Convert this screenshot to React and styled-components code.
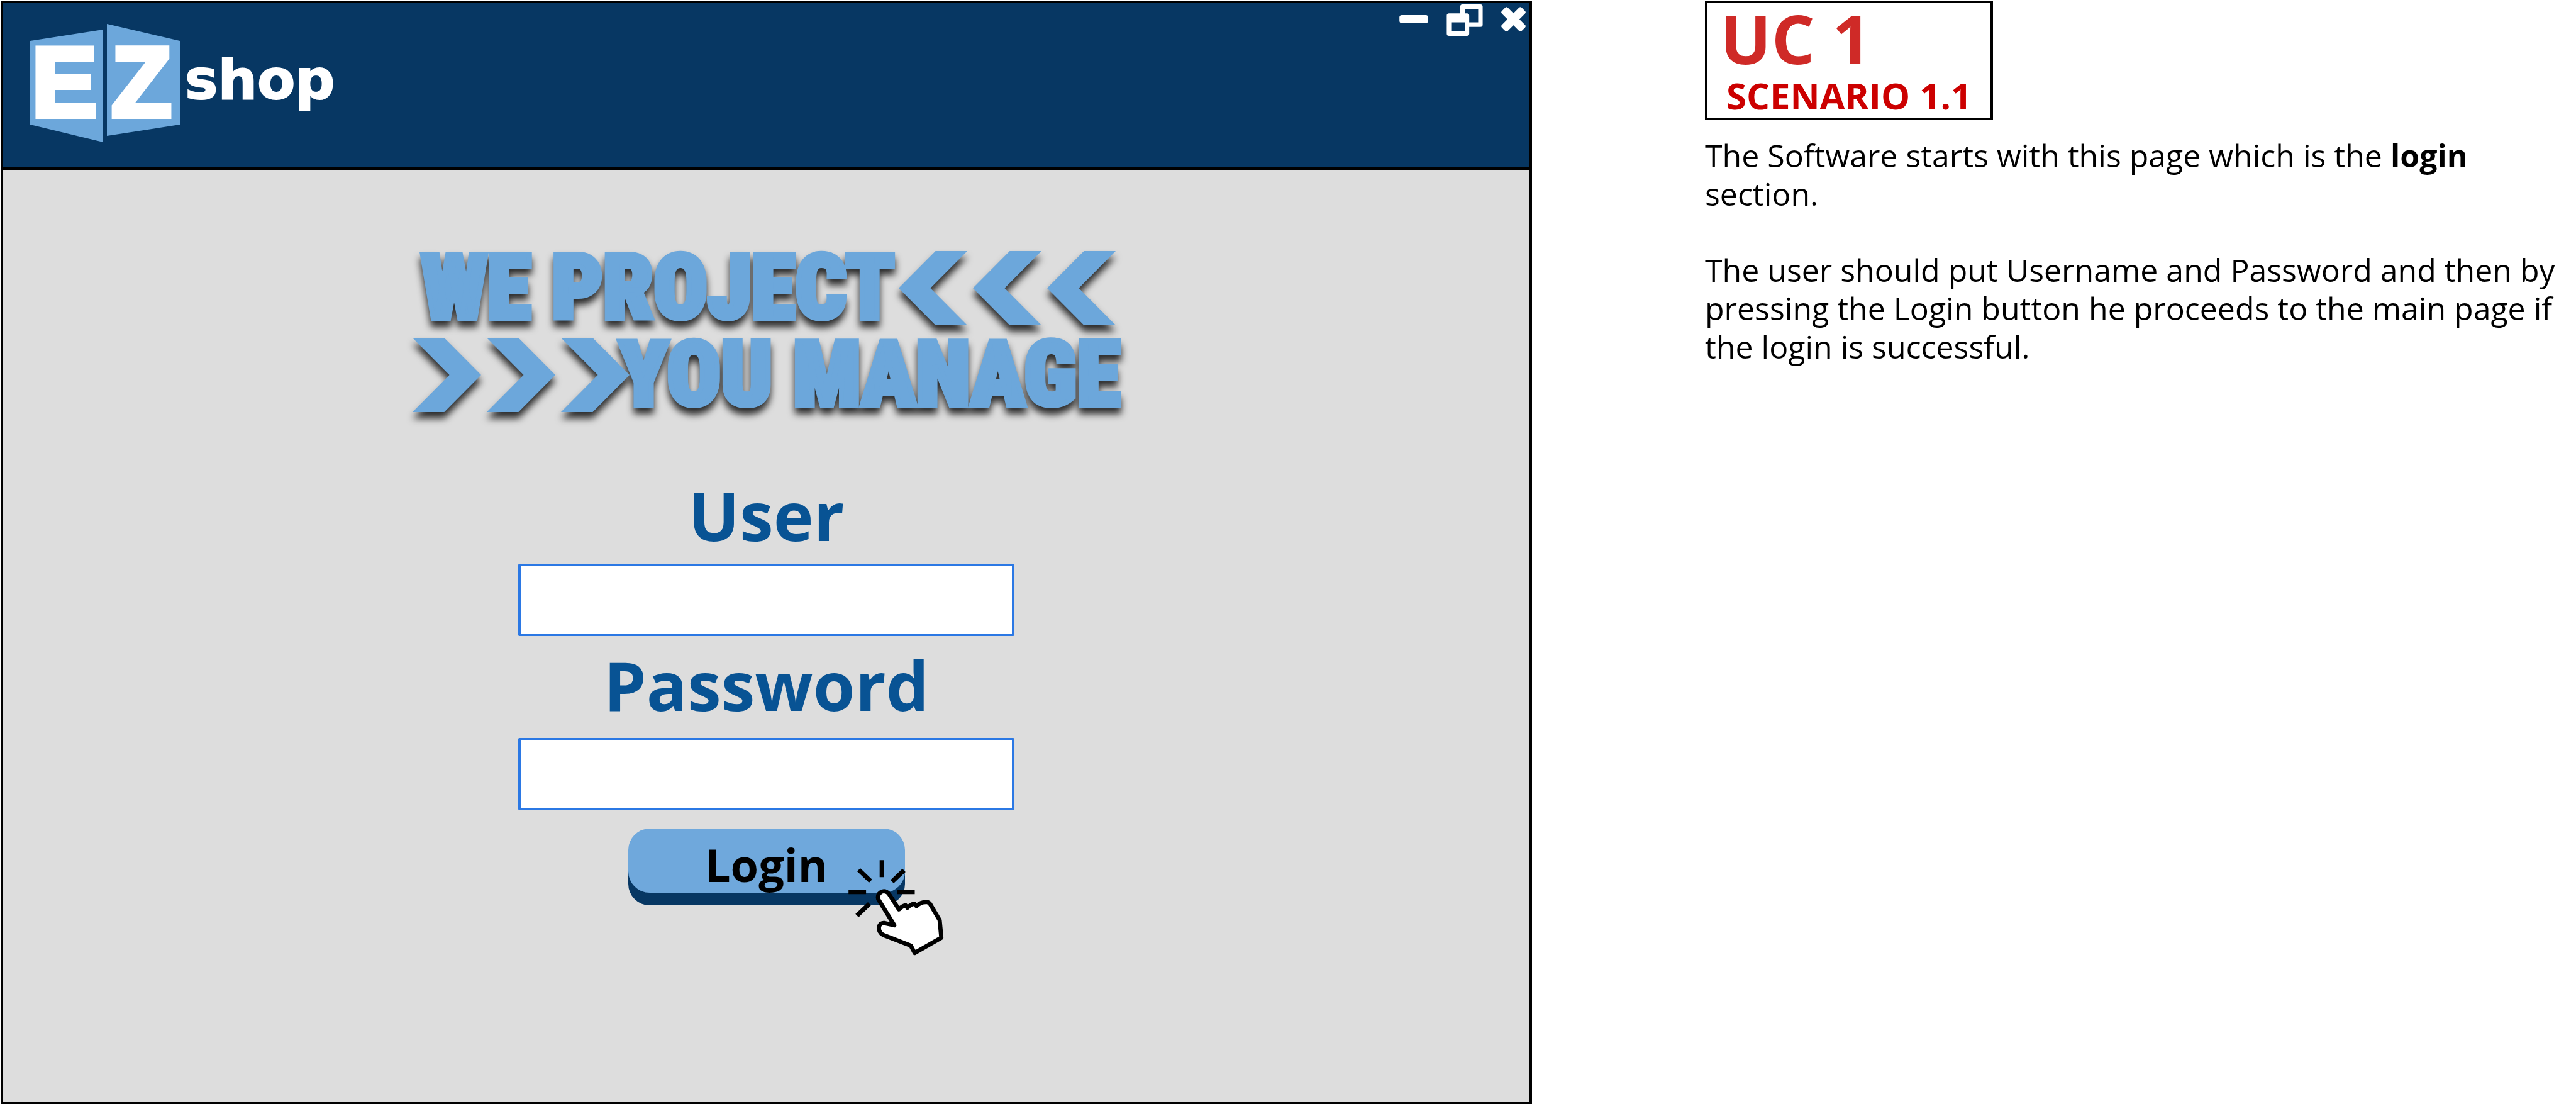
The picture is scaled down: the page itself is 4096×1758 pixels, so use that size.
import React from "react";
import styled, { createGlobalStyle } from "styled-components";

const color = {
  navy: "#073763",
  sky: "#6fa8dc",
  art: "#6ca7db",
  label: "#085394",
  field: "#2b78e4",
  panel: "#dddddd",
};

const GlobalStyle = createGlobalStyle`
  *, *::before, *::after { box-sizing: border-box; }
  body {
    margin: 0;
    background: #fff;
    color: #000;
    font-family: "Open Sans", "Noto Sans", sans-serif;
  }
  h1, h2, h3, p { margin: 0; }
`;

const Page = styled.div`
  display: grid;
  grid-template-columns: minmax(0, 2435fr) minmax(0, 1385fr);
  column-gap: 275px;
  min-height: 100vh;
  padding: 1px 0 3px 1px;
`;

const AppWindow = styled.main`
  display: flex;
  flex-direction: column;
  border: 4px solid #000;
  background: ${color.panel};
`;

const TitleBar = styled.header`
  display: flex;
  align-items: flex-start;
  justify-content: space-between;
  height: 265px;
  padding-left: 43px;
  border-bottom: 4px solid #000;
  background: ${color.navy};
`;

const Brand = styled.div`
  display: flex;
  align-items: flex-start;
  gap: 6px;
  padding-top: 32px;
`;

const BrandMark = styled.svg`
  width: 240px;
  height: 190px;
`;

const BrandLetter = styled.text`
  fill: #fff;
  stroke: #fff;
  stroke-width: 8px;
  stroke-linejoin: miter;
  font: bold 157px "Liberation Sans", Arial, sans-serif;
`;

const BrandName = styled.span`
  padding-top: 38px;
  color: #fff;
  -webkit-text-stroke: 2px #fff;
  font: bold 88px/104px "DejaVu Sans", sans-serif;
`;

const WindowControls = styled.div`
  display: flex;
  gap: 29px;
  padding: 2px 6px 0 0;
`;

const ControlButton = styled.button`
  display: block;
  padding: 0;
  border: 0;
  background: none;
  color: #fff;

  svg {
    display: block;
    height: 50px;
    fill: currentColor;
  }
`;

const Content = styled.div`
  display: flex;
  flex-direction: column;
  align-items: center;
  gap: 80px;
  padding-top: 119px;
`;

const Tagline = styled.h1`
  display: flex;
  flex-direction: column;
  width: 1126px;
  color: ${color.art};
`;

const TaglineRow = styled.span`
  display: flex;
  align-items: center;
  justify-content: space-between;
  height: 138px;
  padding: ${(p) => (p.$overlap ? "0" : "0 8px 0 14px")};
  filter: drop-shadow(0 10px 6px rgba(0, 0, 0, 0.8));

  svg {
    margin-right: ${(p) => (p.$overlap ? "-24px" : "0")};
  }
`;

const TaglineText = styled.span`
  -webkit-text-stroke: 8px ${color.art};
  font: 900 142px/138px "Roboto Condensed", "Roboto", sans-serif;
  white-space: nowrap;
`;

const Chevrons = styled.svg`
  flex: none;
  width: 345px;
  height: 118px;
  fill: ${color.art};
`;

const LoginForm = styled.form`
  display: flex;
  flex-direction: column;
  align-items: center;
`;

const Field = styled.div`
  display: flex;
  flex-direction: column;
  align-items: center;
  gap: ${(p) => p.$gap}px;
  margin-bottom: 4px;
`;

const FieldLabel = styled.label`
  color: ${color.label};
  font-size: 108px;
  font-weight: 700;
  line-height: 148px;
`;

const FieldInput = styled.input`
  width: 789px;
  height: 115px;
  padding: 0 24px;
  border: 4px solid ${color.field};
  border-radius: 2px;
  outline: 0;
  background: #fff;
  color: #000;
  font: 50px/60px "Open Sans", sans-serif;
`;

const Submit = styled.div`
  position: relative;
  margin-top: 25px;
`;

const LoginButton = styled.button`
  display: block;
  width: 440px;
  height: 102px;
  padding: 12px 0 0;
  border: 0;
  border-radius: 34px;
  background: ${color.sky};
  box-shadow: 0 20px 0 ${color.navy};
  color: #000;
  font: 700 72px/90px "Open Sans", sans-serif;
`;

const HandPointer = styled.svg`
  position: absolute;
  top: 43px;
  left: 343px;
  width: 171px;
  height: 162px;
  pointer-events: none;
`;

const Notes = styled.aside`
  display: flex;
  flex-direction: column;
  align-items: flex-start;
  gap: 26px;
`;

const CaseCard = styled.header`
  padding: 0 30px 0 20px;
  border: 4px solid #000;
`;

const CaseTitle = styled.h2`
  color: #cf2a27;
  font-size: 108px;
  line-height: 112px;
`;

const CaseScenario = styled.h3`
  padding-left: 10px;
  color: #cc0000;
  font-size: 58px;
  line-height: 70px;
`;

const Description = styled.div`
  display: flex;
  flex-direction: column;
  gap: 60px;
  font-size: 50px;
  line-height: 61px;
`;

function LeftChevrons() {
  return (
    <Chevrons viewBox="0 0 383 131" preserveAspectRatio="none" aria-hidden="true">
      {[0, 131, 262].map((x) => (
        <path key={x} d="M65 0H121L56 65.500L121 131H65L0 65.500Z" transform={`translate(${x} 0)`} />
      ))}
    </Chevrons>
  );
}

function RightChevrons() {
  return (
    <Chevrons viewBox="0 0 383 131" preserveAspectRatio="none" aria-hidden="true">
      {[0, 131, 262].map((x) => (
        <path key={x} d="M0 0H56L121 65.500L56 131H0L65 65.500Z" transform={`translate(${x} 0)`} />
      ))}
    </Chevrons>
  );
}

export default function App() {
  return (
    <>
      <GlobalStyle />
      <Page>
        <AppWindow>
          <TitleBar>
            <Brand>
              <BrandMark viewBox="0 0 240 190" role="img" aria-label="EZ">
                <path d="M0 28L116 10V189L0 161Z" fill={color.art} />
                <path d="M122 1L238 28V161L122 179Z" fill={color.art} />
                <BrandLetter x="2" y="148">E</BrandLetter>
                <BrandLetter x="129" y="148">Z</BrandLetter>
              </BrandMark>
              <BrandName>shop</BrandName>
            </Brand>
            <WindowControls>
              <ControlButton type="button" aria-label="Minimize">
                <svg viewBox="0 0 51 56" width="46"><rect y="19" width="51" height="14" rx="4" /></svg>
              </ControlButton>
              <ControlButton type="button" aria-label="Restore">
                <svg viewBox="0 0 64 56" width="58">
                  <path
                    fillRule="evenodd"
                    d="M28 0H60Q64 0 64 4V36Q64 40 60 40H40V52Q40 56 36 56H4Q0 56 0 52V20Q0 16 4 16H24V4Q24 0 28 0ZM32 8V16H36Q40 16 40 20V32H56V8ZM8 32V48H32V32Z"
                  />
                </svg>
              </ControlButton>
              <ControlButton type="button" aria-label="Close">
                <svg viewBox="0 0 43 56" width="39">
                  <g transform="translate(21.500 26.500) rotate(45)">
                    <rect x="-25" y="-7.500" width="50" height="15" rx="3.500" />
                    <rect x="-7.500" y="-25" width="15" height="50" rx="3.500" />
                  </g>
                </svg>
              </ControlButton>
            </WindowControls>
          </TitleBar>
          <Content>
            <Tagline>
              <TaglineRow>
                <TaglineText>WE PROJECT</TaglineText>
                <LeftChevrons />
              </TaglineRow>
              <TaglineRow $overlap>
                <RightChevrons />
                <TaglineText>YOU MANAGE</TaglineText>
              </TaglineRow>
            </Tagline>
            <LoginForm onSubmit={(e) => e.preventDefault()}>
              <Field $gap={3}>
                <FieldLabel htmlFor="user">User</FieldLabel>
                <FieldInput id="user" type="text" />
              </Field>
              <Field $gap={10}>
                <FieldLabel htmlFor="password">Password</FieldLabel>
                <FieldInput id="password" type="password" />
              </Field>
              <Submit>
                <LoginButton type="submit">Login</LoginButton>
                <HandPointer viewBox="0 0 190 180" aria-hidden="true">
                  <path
                    d="M67 8V38M8 64H39M94 64H125M26 25L47 45M106 26L85 46M45 85L23 106"
                    fill="none"
                    stroke="#000"
                    strokeWidth="8"
                  />
                  <path
                    d="M60.500 77C58 66 68 61 75 64Q79 66 81 70L97 95Q103 89 109 88L112 92Q118 86 124 85L128 89Q136 82 144 82Q150 81 153 87L169 114L172 145L125 172L118 159L69 140C58 133 60 118 71 119L89 123Z"
                    fill="#fff"
                    stroke="#000"
                    strokeWidth="7.500"
                    strokeLinejoin="round"
                  />
                </HandPointer>
              </Submit>
            </LoginForm>
          </Content>
        </AppWindow>
        <Notes>
          <CaseCard>
            <CaseTitle>UC 1</CaseTitle>
            <CaseScenario>SCENARIO 1.1</CaseScenario>
          </CaseCard>
          <Description>
            <p>
              The Software starts with this page which is the <b>login</b> section.
            </p>
            <p>
              The user should put Username and Password and then by pressing the Login button he
              proceeds to the main page if the login is successful.
            </p>
          </Description>
        </Notes>
      </Page>
    </>
  );
}
